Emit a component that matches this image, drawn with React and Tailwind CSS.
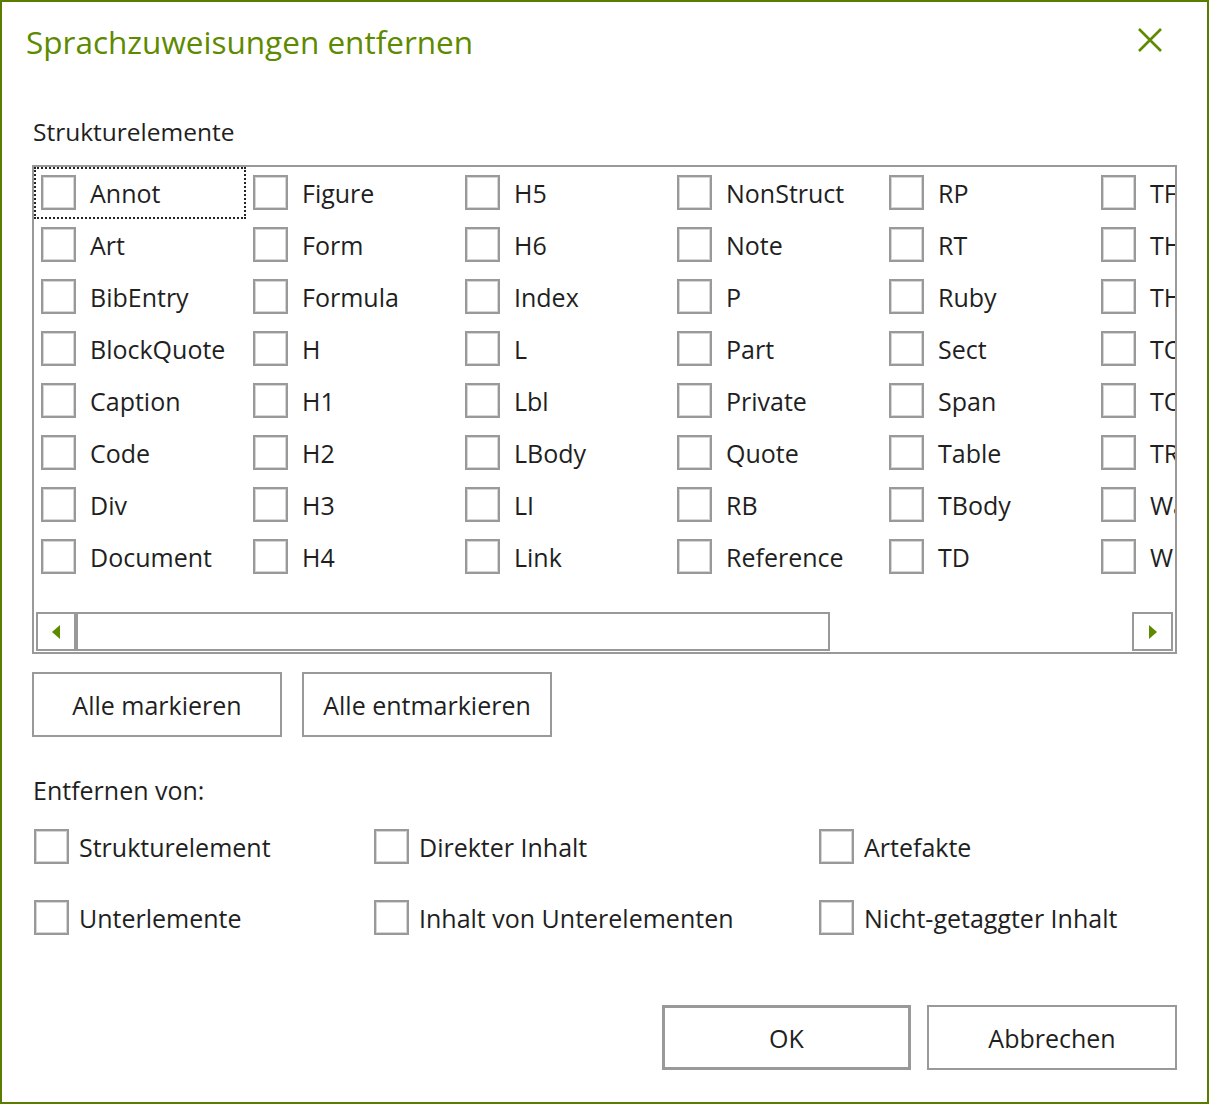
import React from 'react';

const columns = [
  ['Annot', 'Art', 'BibEntry', 'BlockQuote', 'Caption', 'Code', 'Div', 'Document'],
  ['Figure', 'Form', 'Formula', 'H', 'H1', 'H2', 'H3', 'H4'],
  ['H5', 'H6', 'Index', 'L', 'Lbl', 'LBody', 'LI', 'Link'],
  ['NonStruct', 'Note', 'P', 'Part', 'Private', 'Quote', 'RB', 'Reference'],
  ['RP', 'RT', 'Ruby', 'Sect', 'Span', 'Table', 'TBody', 'TD'],
  ['TFoot', 'TH', 'THead', 'TOC', 'TOCI', 'TR', 'Warichu', 'WP'],
];

const Box = () => (
  <span className="block w-[35px] h-[35px] shrink-0 border-2 border-[#999] bg-white shadow-[inset_0_0_0_1px_#d6d6d6]" />
);

// Zelle in der Liste der Strukturelemente
const ListItem = ({ label, focused }) => (
  <div
    className={
      'flex items-center h-[52px] w-[212px] shrink-0 pl-[7px] pb-[1px] ' +
      (focused ? 'outline-2 outline-dotted outline-[#222] -outline-offset-2' : '')
    }
  >
    <Box />
    <span className="ml-[14px] pt-[3px] whitespace-nowrap">{label}</span>
  </div>
);

const Option = ({ label, width }) => (
  <div className={'flex items-center h-[35px] ' + width}>
    <Box />
    <span className="ml-[10px] pt-[2px] whitespace-nowrap">{label}</span>
  </div>
);

const App = () => {
  return (
    <div
      className="w-[1209px] h-[1104px] border-2 border-[#5a7d00] bg-white text-[#1f1f1f] text-[25px] flex flex-col"
      style={{ fontFamily: '"Open Sans", "Noto Sans", sans-serif' }}
    >
      <div className="flex items-center justify-between pt-[20px] pl-[24px] pr-[44px]">
        <h1 className="text-[31.5px] leading-[40px] text-[#5e8a00]">Sprachzuweisungen entfernen</h1>
        <svg width="26" height="26" viewBox="0 0 26 26" className="-mt-[4px]">
          <path d="M2 2 L24 24 M24 2 L2 24" stroke="#5e8a00" strokeWidth="2.6" fill="none" />
        </svg>
      </div>

      <div className="px-[30px] flex flex-col">
        <div className="mt-[54px] leading-[32px] pl-[1px] text-[24.5px]">Strukturelemente</div>

        <div className="mt-[17px] h-[489px] border-2 border-[#999] flex flex-col">
          <div className="flex overflow-hidden">
            {columns.map((col, ci) => (
              <div key={ci} className="flex flex-col shrink-0">
                {col.map((label, ri) => (
                  <ListItem key={label} label={label} focused={ci === 0 && ri === 0} />
                ))}
              </div>
            ))}
          </div>

          <div className="mt-[29px] mx-[2px] h-[39px] flex">
            <div className="w-[40px] h-full border-2 border-[#999] flex items-center justify-center">
              <svg width="8" height="14" viewBox="0 0 8 14">
                <path d="M8 0 L0 7 L8 14 Z" fill="#5e8a00" />
              </svg>
            </div>
            <div className="w-[754px] h-full border-2 border-[#999]" />
            <div className="flex-1" />
            <div className="w-[41px] h-full border-2 border-[#999] flex items-center justify-center">
              <svg width="8" height="14" viewBox="0 0 8 14">
                <path d="M0 0 L8 7 L0 14 Z" fill="#5e8a00" />
              </svg>
            </div>
          </div>
        </div>

        <div className="mt-[18px] flex gap-[20px]">
          <button className="w-[250px] h-[65px] pt-[2px] border-2 border-[#999] bg-white">Alle markieren</button>
          <button className="w-[250px] h-[65px] pt-[2px] border-2 border-[#999] bg-white">Alle entmarkieren</button>
        </div>

        <div className="mt-[37px] leading-[32px] pl-[1px]">Entfernen von:</div>

        <div className="mt-[23px] pl-[2px] flex flex-col gap-[36px]">
          <div className="flex">
            <Option label="Strukturelement" width="w-[340px]" />
            <Option label="Direkter Inhalt" width="w-[445px]" />
            <Option label="Artefakte" width="" />
          </div>
          <div className="flex">
            <Option label="Unterlemente" width="w-[340px]" />
            <Option label="Inhalt von Unterelementen" width="w-[445px]" />
            <Option label="Nicht-getaggter Inhalt" width="" />
          </div>
        </div>

        <div className="mt-[70px] flex justify-end gap-[16px]">
          <button className="w-[249px] h-[65px] pt-[2px] border-[3px] border-[#999] bg-white">OK</button>
          <button className="w-[250px] h-[65px] pt-[2px] border-2 border-[#999] bg-white">Abbrechen</button>
        </div>
      </div>
    </div>
  );
};

export default App;
